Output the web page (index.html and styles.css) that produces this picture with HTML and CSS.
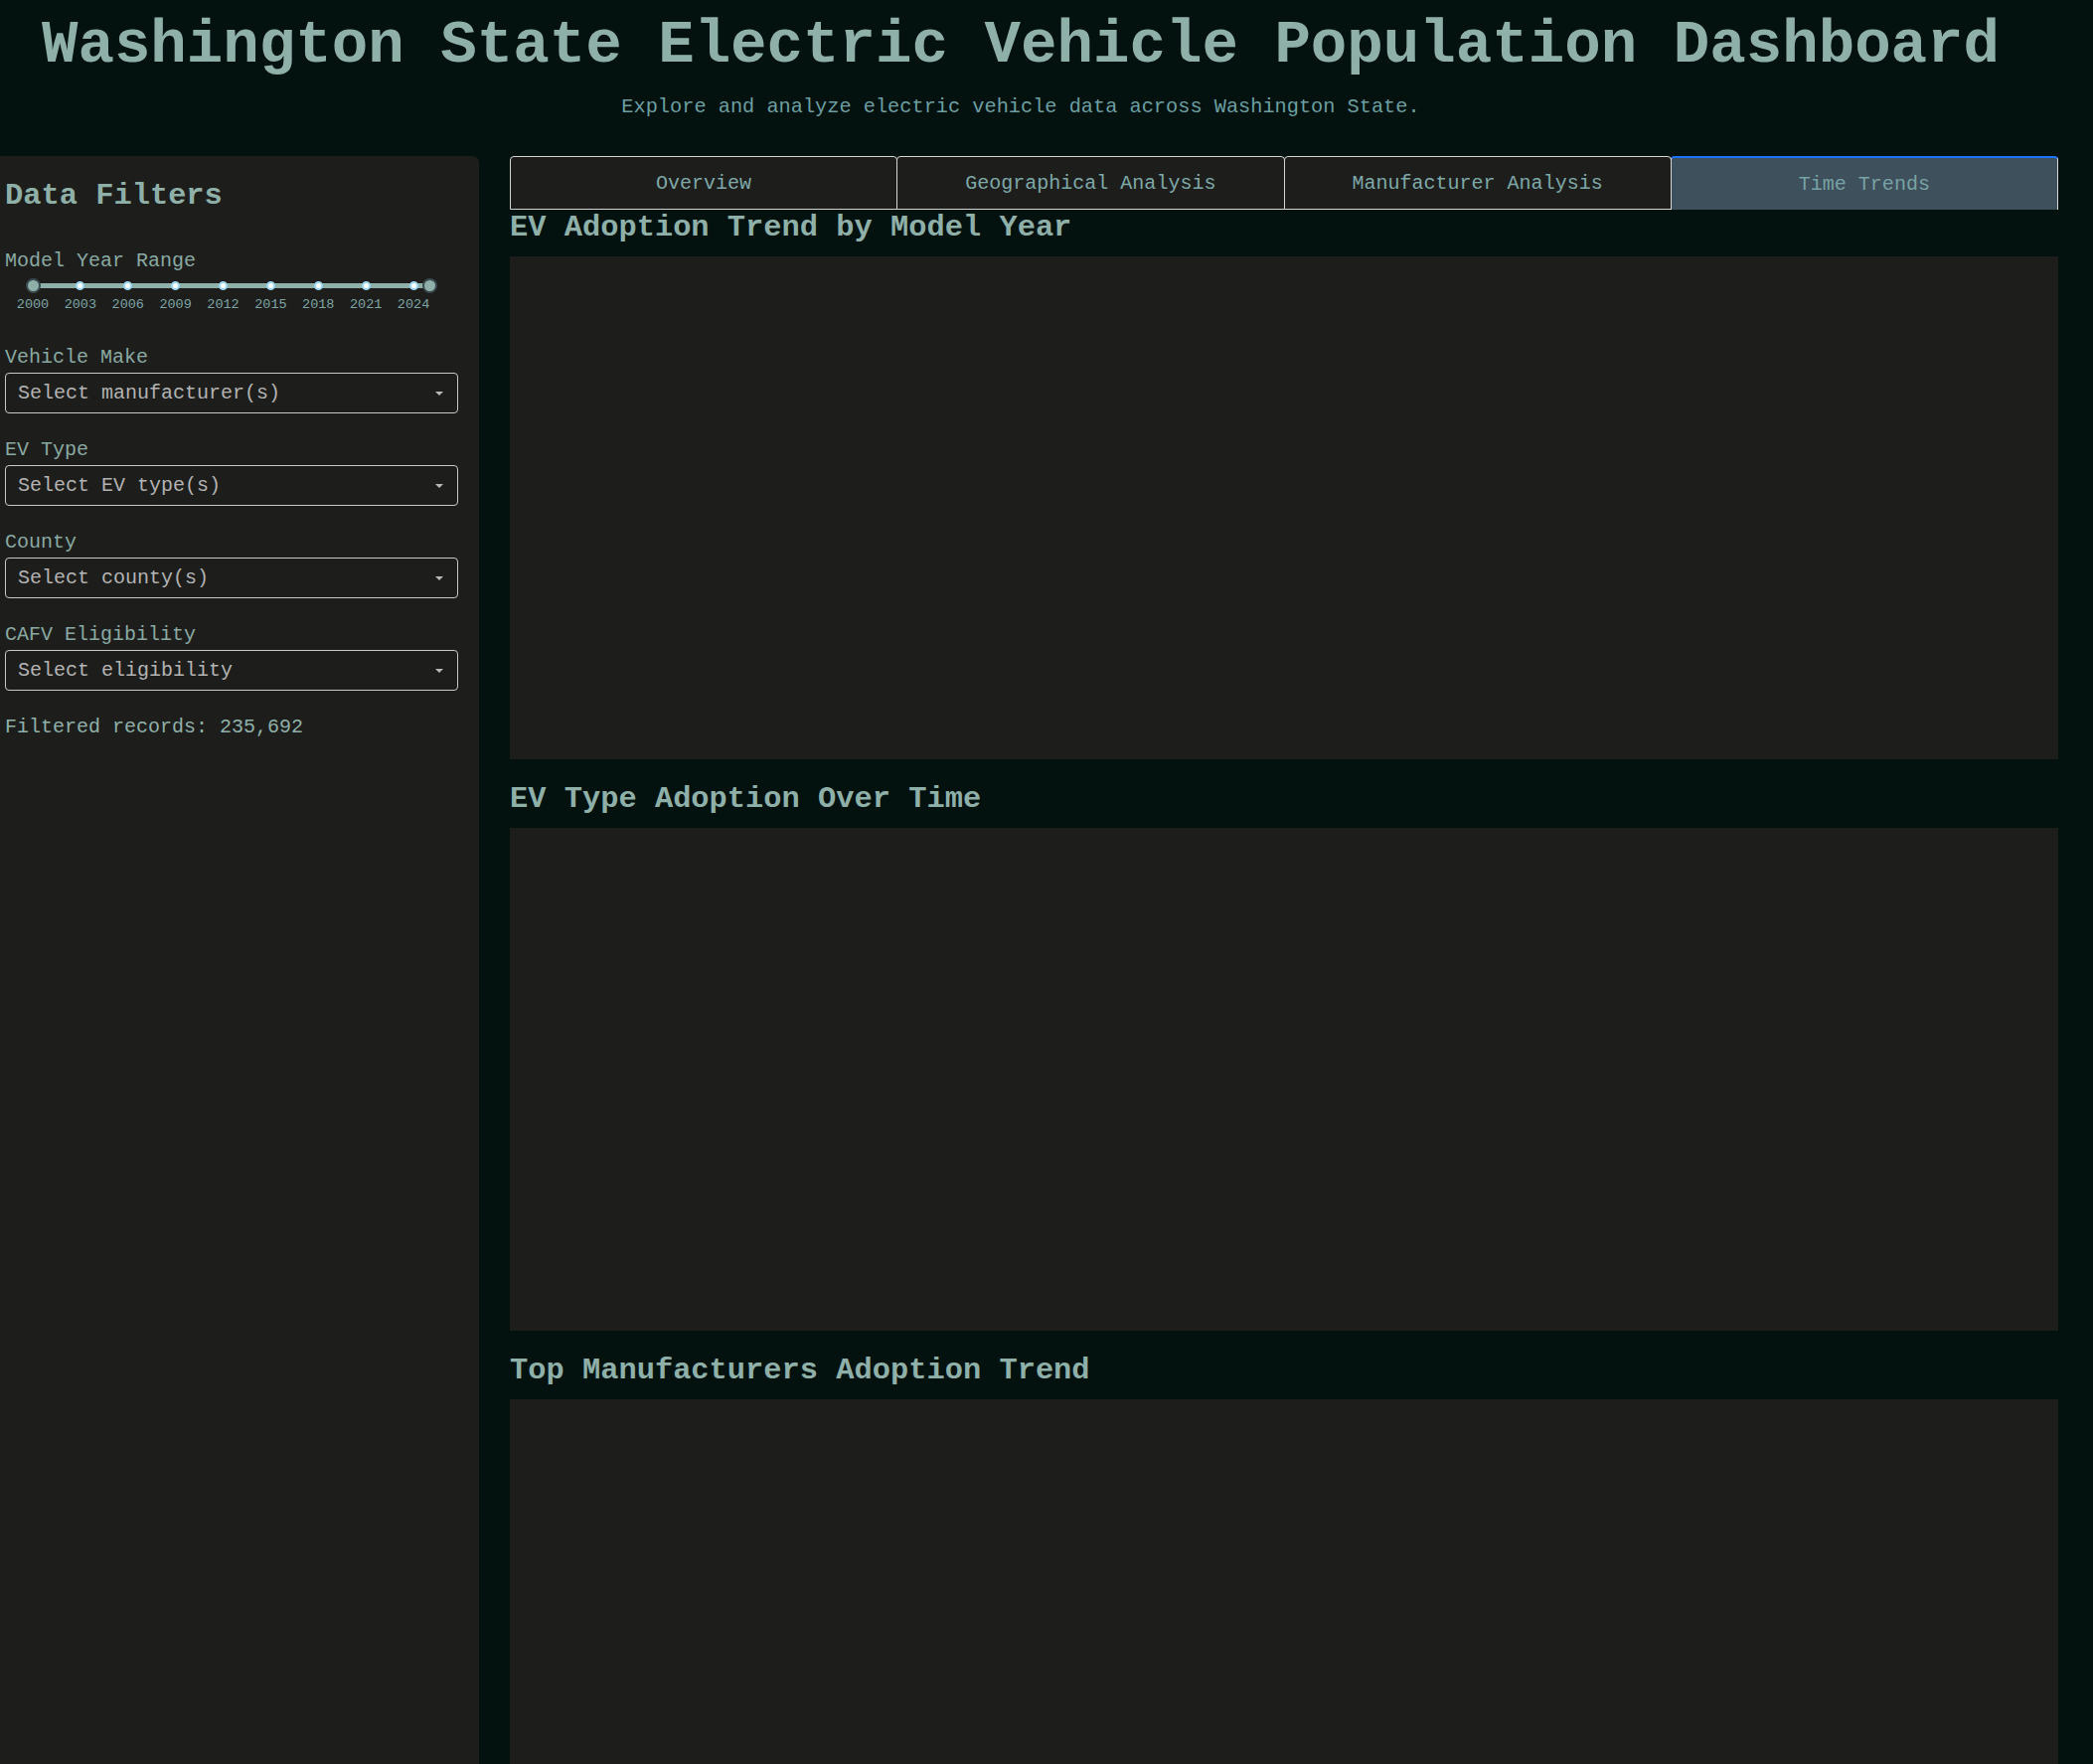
FILE: index.html
```html
<!DOCTYPE html>
<html lang="en">
<head>
<meta charset="utf-8">
<title>Washington State Electric Vehicle Population Dashboard</title>
<link rel="stylesheet" href="styles.css">
</head>
<body>
<div class="app">
  <header class="header">
    <h1 class="title">Washington State Electric Vehicle Population Dashboard</h1>
    <p class="subtitle">Explore and analyze electric vehicle data across Washington State.</p>
  </header>
  <div class="layout">
    <aside class="sidebar">
      <h2 class="sidebar-title">Data Filters</h2>
      <div class="field-label">Model Year Range</div>
      <div class="slider">
        <div class="slider-track"></div>
        <span class="slider-dot" style="left:0%"></span>
        <span class="slider-dot" style="left:12%"></span>
        <span class="slider-dot" style="left:24%"></span>
        <span class="slider-dot" style="left:36%"></span>
        <span class="slider-dot" style="left:48%"></span>
        <span class="slider-dot" style="left:60%"></span>
        <span class="slider-dot" style="left:72%"></span>
        <span class="slider-dot" style="left:84%"></span>
        <span class="slider-dot" style="left:96%"></span>
        <span class="slider-handle" style="left:0%"></span>
        <span class="slider-handle" style="left:100%"></span>
        <span class="slider-mark" style="left:0%">2000</span>
        <span class="slider-mark" style="left:12%">2003</span>
        <span class="slider-mark" style="left:24%">2006</span>
        <span class="slider-mark" style="left:36%">2009</span>
        <span class="slider-mark" style="left:48%">2012</span>
        <span class="slider-mark" style="left:60%">2015</span>
        <span class="slider-mark" style="left:72%">2018</span>
        <span class="slider-mark" style="left:84%">2021</span>
        <span class="slider-mark" style="left:96%">2024</span>
      </div>
      <div class="filters">
        <div class="filter">
          <div class="field-label">Vehicle Make</div>
          <div class="dropdown"><span class="placeholder">Select manufacturer(s)</span><span class="caret"></span></div>
        </div>
        <div class="filter">
          <div class="field-label">EV Type</div>
          <div class="dropdown"><span class="placeholder">Select EV type(s)</span><span class="caret"></span></div>
        </div>
        <div class="filter">
          <div class="field-label">County</div>
          <div class="dropdown"><span class="placeholder">Select county(s)</span><span class="caret"></span></div>
        </div>
        <div class="filter">
          <div class="field-label">CAFV Eligibility</div>
          <div class="dropdown"><span class="placeholder">Select eligibility</span><span class="caret"></span></div>
        </div>
      </div>
      <p class="records">Filtered records: 235,692</p>
    </aside>
    <main class="main">
      <nav class="tabs">
        <div class="tab">Overview</div>
        <div class="tab">Geographical Analysis</div>
        <div class="tab">Manufacturer Analysis</div>
        <div class="tab tab-selected">Time Trends</div>
      </nav>
      <section class="chart-section">
        <h3 class="chart-title">EV Adoption Trend by Model Year</h3>
        <div class="chart"></div>
      </section>
      <section class="chart-section">
        <h3 class="chart-title">EV Type Adoption Over Time</h3>
        <div class="chart"></div>
      </section>
      <section class="chart-section">
        <h3 class="chart-title">Top Manufacturers Adoption Trend</h3>
        <div class="chart"></div>
      </section>
    </main>
  </div>
</div>
</body>
</html>
```

FILE: styles.css
```css
html {
  background: #03110f;
}

body {
  margin: 0;
  background: #03110f;
  font-family: "Liberation Mono", "Courier New", monospace;
  color: #8fb0a8;
}

.header {
  padding: 11px 52px 0 0;
  text-align: center;
}

.title {
  margin: 0;
  font-size: 60.8px;
  line-height: 70px;
  font-weight: bold;
  color: #8fb0a8;
}

.subtitle {
  margin: 15px 0 0;
  font-size: 20.3px;
  line-height: 24px;
  color: #6c9fa1;
}

.layout {
  display: flex;
  align-items: stretch;
  margin-top: 37px;
}

.sidebar {
  width: 482px;
  flex-shrink: 0;
  box-sizing: border-box;
  padding: 22px 21px 40px 5px;
  background: #1d1e1c;
  border-top-right-radius: 6px;
}

.sidebar-title {
  margin: 0;
  font-size: 30.4px;
  line-height: 36px;
  font-weight: bold;
  color: #8fb0a8;
}

.field-label {
  font-size: 20px;
  line-height: 24px;
  color: #8aa9a2;
}

.sidebar-title + .field-label {
  margin-top: 36px;
}

.slider {
  position: relative;
  height: 36px;
  margin: 2px 29px 0 28px;
}

.slider-track {
  position: absolute;
  left: 0;
  right: 0;
  top: 8px;
  height: 5px;
  background: #8fb0a8;
}

.slider-dot {
  position: absolute;
  top: 6px;
  width: 5px;
  height: 5px;
  margin-left: -4.5px;
  border: 2px solid #9fd6f2;
  border-radius: 50%;
  background: #ffffff;
}

.slider-handle {
  position: absolute;
  top: 3px;
  width: 11px;
  height: 11px;
  margin-left: -7.5px;
  border: 2px solid #3b4a50;
  border-radius: 50%;
  background: #8fb0a8;
}

.slider-mark {
  position: absolute;
  top: 22px;
  transform: translateX(-50%);
  font-size: 13.5px;
  line-height: 16px;
  color: #7fa4a6;
}

.filters {
  margin-top: 35px;
}

.filter {
  margin-bottom: 25px;
}

.filter .field-label {
  margin-bottom: 3px;
}

.dropdown {
  position: relative;
  display: flex;
  align-items: center;
  box-sizing: border-box;
  height: 41px;
  padding: 0 30px 0 12px;
  border: 1px solid #c9c9c9;
  border-radius: 4px;
  background: #1d1e1c;
}

.placeholder {
  font-size: 20px;
  line-height: 24px;
  color: #b3b3b3;
}

.caret {
  position: absolute;
  right: 14px;
  top: 18px;
  width: 0;
  height: 0;
  border-left: 4.5px solid transparent;
  border-right: 4.5px solid transparent;
  border-top: 4.5px solid #b8b8b8;
}

.records {
  margin: 0;
  font-size: 20px;
  line-height: 24px;
  color: #8fb0a8;
}

.main {
  flex: 1;
  min-width: 0;
  margin: 0 35px 0 31px;
  padding-bottom: 592px;
}

.tabs {
  display: flex;
  height: 54px;
}

.tab {
  flex: 1;
  display: flex;
  align-items: center;
  justify-content: center;
  box-sizing: border-box;
  border: 1px solid #d6d6d6;
  border-radius: 4px 4px 0 0;
  background: #1d1e1c;
  font-size: 20px;
  color: #7fa8a8;
}

.tab + .tab {
  margin-left: -1px;
}

.tab-selected {
  background: #3e505c;
  border-top: 2px solid #1975fa;
  border-bottom: none;
  color: #78a2a3;
  padding-top: 1px;
}

.chart-title {
  margin: 22px 0 11px;
  font-size: 30.4px;
  line-height: 36px;
  font-weight: bold;
  color: #8fb0a8;
}

.chart-section:first-of-type .chart-title {
  margin-top: 0;
}

.chart {
  height: 506px;
  background: #1d1e1c;
}
```
